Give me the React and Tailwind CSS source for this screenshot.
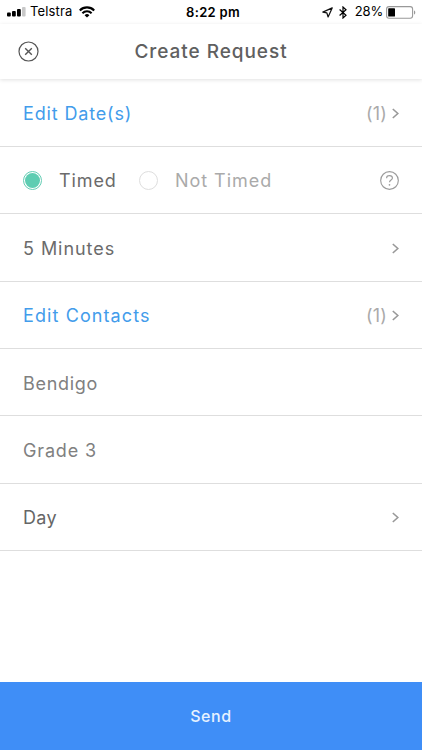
import React, { useState } from 'react';

function SignalIcon() {
    return (
        <svg width="19" height="10" viewBox="0 0 19 10" className="block">
            <rect x="0" y="5.5" width="3.8" height="4" rx="1" fill="#000" />
            <rect x="5" y="4" width="3.8" height="5.5" rx="1" fill="#000" />
            <rect x="10" y="2" width="3.8" height="7.5" rx="1" fill="#000" />
            <rect x="15" y="0" width="3.6" height="9.5" rx="1" fill="#c8c8c8" />
        </svg>
    );
}

function WifiIcon() {
    return (
        <svg width="16" height="12" viewBox="0 0 16 12" fill="none" stroke="#000" strokeWidth="2.1" className="block">
            <path d="M0.8 4.4a10.2 10.2 0 0 1 14.4 0" />
            <path d="M3.4 7.2a6.5 6.5 0 0 1 9.2 0" />
            <path d="M8 11.6 5.6 9.2a3.4 3.4 0 0 1 4.8 0z" fill="#000" stroke="none" />
        </svg>
    );
}

function LocationIcon() {
    return (
        <svg width="11" height="11" viewBox="0 0 11 11" fill="none" stroke="#111" strokeWidth="1.2" strokeLinejoin="round" className="block">
            <path d="M10.2 0.9 0.8 5.1 4.8 5.8 6.1 10z" />
        </svg>
    );
}

function BluetoothIcon() {
    return (
        <svg width="8" height="13" viewBox="0 0 8 13" fill="none" stroke="#000" strokeWidth="1.2" className="block">
            <path d="M0.6 3.5 7 9.3 4 12V1L7 3.7 0.6 9.5" />
        </svg>
    );
}

function BatteryIcon() {
    return (
        <svg width="30" height="13" viewBox="0 0 30 13" className="block">
            <rect x="0.6" y="0.6" width="26" height="11.6" rx="2.4" fill="#fff" stroke="#999" strokeWidth="1.1" />
            <rect x="2.2" y="2.2" width="6.8" height="8.4" rx="0.7" fill="#000" />
            <path d="M28 4.4c1.7 0.5 1.7 3.5 0 4z" fill="#999" />
        </svg>
    );
}

function CloseIcon() {
    return (
        <svg width="21" height="21" viewBox="0 0 21 21" fill="none" stroke="#555" strokeWidth="1.2" className="block">
            <circle cx="10.5" cy="10.5" r="9.5" />
            <path d="M7.2 7.2 13.8 13.8M13.8 7.2 7.2 13.8" strokeWidth="1.4" />
        </svg>
    );
}

function HelpIcon() {
    return (
        <svg width="19" height="19" viewBox="0 0 20 20" fill="none" stroke="#9b9b9b" strokeWidth="1.2" className="block">
            <circle cx="10" cy="10" r="9.3" />
            <path d="M7 7.6V6.9C7.2 5.5 8.3 4.9 10 4.9s3.1 0.9 3.1 2.5c0 2.1-3.1 2-3.1 4.4" />
            <circle cx="10" cy="14.6" r="0.9" fill="#9b9b9b" stroke="none" />
        </svg>
    );
}

function ChevronIcon() {
    return (
        <svg width="7" height="11" viewBox="0 0 7 11" fill="none" stroke="#999" strokeWidth="1.6" className="block">
            <path d="M0.8 1 5.8 5.5 0.8 10" />
        </svg>
    );
}

function Row({ children }) {
    return (
        <div className="flex h-[67.4px] items-center border-b border-[#dedede] pt-0.5 pl-[23px] pr-[23px]">
            {children}
        </div>
    );
}

function LinkRow({ label, labelClass, count }) {
    return (
        <Row>
            <span className={labelClass}>{label}</span>
            <span className="ml-auto flex items-center gap-[5px] text-[18px] text-[#aaa]">
                {count && <span className="tracking-[0.2px]">({count})</span>}
                <ChevronIcon />
            </span>
        </Row>
    );
}

export default function App() {
    const [timed, setTimed] = useState(true);

    return (
        <div className="flex h-[750px] w-[422px] flex-col overflow-hidden bg-white font-['Inter',sans-serif] whitespace-nowrap">
            {/* Status bar */}
            <div className="grid h-6 grid-cols-[1fr_auto_1fr] items-center pl-[7px] pr-1.5 text-[13px] text-black">
                <div className="flex items-center gap-1">
                    <SignalIcon />
                    <span className="tracking-[0.15px]">Telstra</span>
                    <span className="ml-[3px]"><WifiIcon /></span>
                </div>
                <span className="pl-[3px] pt-px text-[13px] font-semibold tracking-[0.3px]">8:22 pm</span>
                <div className="flex items-center justify-end">
                    <LocationIcon />
                    <span className="ml-1.5"><BluetoothIcon /></span>
                    <span className="ml-2 tracking-[-0.2px]">28%</span>
                    <span className="ml-[3px]"><BatteryIcon /></span>
                </div>
            </div>

            {/* Header */}
            <header className="grid h-[55px] grid-cols-[1fr_auto_1fr] items-center pl-[18px] pr-[18px] shadow-[0_1px_4px_rgba(0,0,0,0.12)]">
                <button><CloseIcon /></button>
                <h1 className="pt-0.5 text-[19px] font-medium tracking-[0.95px] text-[#606060]">Create Request</h1>
            </header>

            <main className="flex-1 pt-[0.4px] text-[18px] text-[#6b6b6b]">
                <LinkRow label="Edit Date(s)" labelClass="tracking-[0.85px] text-[#429ceb]" count={1} />
                <Row>
                    <button className="flex items-center" onClick={() => setTimed(true)}>
                        <span className="flex size-[19px] items-center justify-center rounded-full border border-[#64cdb4]">
                            {timed && <span className="size-[15px] rounded-full bg-[#5ecdb2]" />}
                        </span>
                        <span className="ml-[17px] w-[57px] text-left tracking-[0.9px]">Timed</span>
                    </button>
                    <button className="ml-[23px] flex items-center text-[#aaa]" onClick={() => setTimed(false)}>
                        <span className="flex size-[19px] items-center justify-center rounded-full border border-[#dedede]">
                            {!timed && <span className="size-[15px] rounded-full bg-[#5ecdb2]" />}
                        </span>
                        <span className="ml-[17px] tracking-[0.95px]">Not Timed</span>
                    </button>
                    <span className="ml-auto"><HelpIcon /></span>
                </Row>
                <LinkRow label="5 Minutes" labelClass="tracking-[0.95px] text-[#6b6b6b]" />
                <LinkRow label="Edit Contacts" labelClass="tracking-[1.1px] text-[#429ceb]" count={1} />
                <Row><span className="tracking-[0.7px] text-[#808080]">Bendigo</span></Row>
                <Row><span className="tracking-[0.85px] text-[#808080]">Grade 3</span></Row>
                <LinkRow label="Day" labelClass="tracking-[0.3px] text-[#666]" />
            </main>

            <button className="h-[68px] bg-[#3f8ef7] text-base font-medium tracking-[0.6px] text-[#e6f2ff]">Send</button>
        </div>
    );
}
